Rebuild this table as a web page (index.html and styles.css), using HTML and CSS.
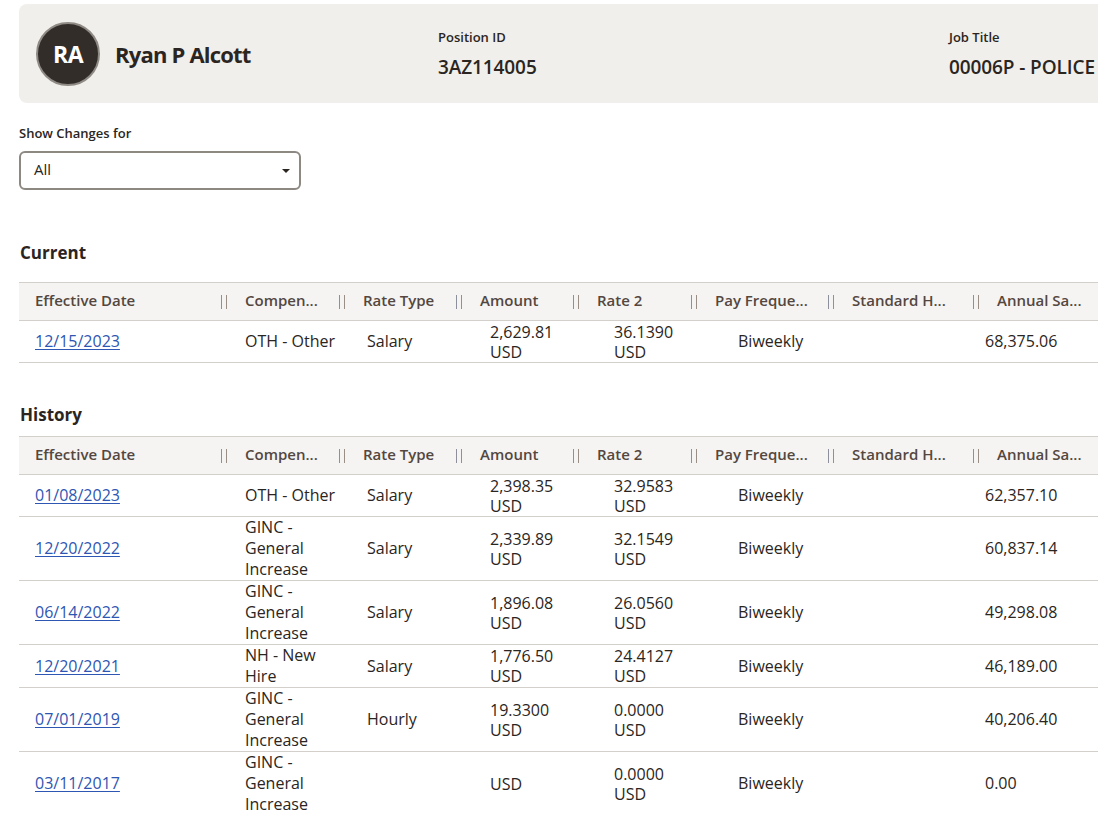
FILE: index.html
```html
<!DOCTYPE html>
<html lang="en">
<head>
<meta charset="utf-8">
<title>Compensation History</title>
<link rel="stylesheet" href="styles.css">
</head>
<body>
<div class="page">
  <div class="profile-card">
    <div class="person">
      <div class="avatar">RA</div>
      <div class="name">Ryan P Alcott</div>
    </div>
    <div class="field field-pos">
      <div class="field-label">Position ID</div>
      <div class="field-value">3AZ114005</div>
    </div>
    <div class="field field-job">
      <div class="field-label">Job Title</div>
      <div class="field-value">00006P - POLICE OFFICER</div>
    </div>
  </div>

  <div class="filter">
    <div class="filter-label">Show Changes for</div>
    <div class="select">
      <span>All</span>
      <svg class="caret" width="8" height="4" viewBox="0 0 8 4"><path d="M0 0H8L4 4Z" fill="#2b2522"/></svg>
    </div>
  </div>

  <section class="section section-current">
    <h2 class="section-title">Current</h2>
    <table class="grid">
      <colgroup>
        <col class="c1"><col class="c2"><col class="c3"><col class="c4"><col class="c5"><col class="c6"><col class="c7"><col class="c8">
      </colgroup>
      <thead>
        <tr>
          <th><div class="th"><span>Effective Date</span><i class="handle"></i></div></th>
          <th><div class="th"><span>Compen...</span><i class="handle"></i></div></th>
          <th><div class="th"><span>Rate Type</span><i class="handle"></i></div></th>
          <th><div class="th"><span>Amount</span><i class="handle"></i></div></th>
          <th><div class="th"><span>Rate 2</span><i class="handle"></i></div></th>
          <th><div class="th"><span>Pay Freque...</span><i class="handle"></i></div></th>
          <th><div class="th"><span>Standard H...</span><i class="handle"></i></div></th>
          <th><div class="th"><span>Annual Sa...</span></div></th>
        </tr>
      </thead>
      <tbody>
        <tr>
          <td class="d-date"><a href="#">12/15/2023</a></td>
          <td class="d-comp">OTH - Other</td>
          <td class="d-type">Salary</td>
          <td class="d-amt"><span class="ln">2,629.81</span><span class="ln">USD</span></td>
          <td class="d-rate"><span class="ln">36.1390</span><span class="ln">USD</span></td>
          <td class="d-freq">Biweekly</td>
          <td class="d-std"></td>
          <td class="d-ann">68,375.06</td>
        </tr>
      </tbody>
    </table>
  </section>

  <section class="section section-history">
    <h2 class="section-title">History</h2>
    <table class="grid">
      <colgroup>
        <col class="c1"><col class="c2"><col class="c3"><col class="c4"><col class="c5"><col class="c6"><col class="c7"><col class="c8">
      </colgroup>
      <thead>
        <tr>
          <th><div class="th"><span>Effective Date</span><i class="handle"></i></div></th>
          <th><div class="th"><span>Compen...</span><i class="handle"></i></div></th>
          <th><div class="th"><span>Rate Type</span><i class="handle"></i></div></th>
          <th><div class="th"><span>Amount</span><i class="handle"></i></div></th>
          <th><div class="th"><span>Rate 2</span><i class="handle"></i></div></th>
          <th><div class="th"><span>Pay Freque...</span><i class="handle"></i></div></th>
          <th><div class="th"><span>Standard H...</span><i class="handle"></i></div></th>
          <th><div class="th"><span>Annual Sa...</span></div></th>
        </tr>
      </thead>
      <tbody>
        <tr>
          <td class="d-date"><a href="#">01/08/2023</a></td>
          <td class="d-comp">OTH - Other</td>
          <td class="d-type">Salary</td>
          <td class="d-amt"><span class="ln">2,398.35</span><span class="ln">USD</span></td>
          <td class="d-rate"><span class="ln">32.9583</span><span class="ln">USD</span></td>
          <td class="d-freq">Biweekly</td>
          <td class="d-std"></td>
          <td class="d-ann">62,357.10</td>
        </tr>
        <tr>
          <td class="d-date"><a href="#">12/20/2022</a></td>
          <td class="d-comp"><span class="ln">GINC -</span><span class="ln">General</span><span class="ln">Increase</span></td>
          <td class="d-type">Salary</td>
          <td class="d-amt"><span class="ln">2,339.89</span><span class="ln">USD</span></td>
          <td class="d-rate"><span class="ln">32.1549</span><span class="ln">USD</span></td>
          <td class="d-freq">Biweekly</td>
          <td class="d-std"></td>
          <td class="d-ann">60,837.14</td>
        </tr>
        <tr>
          <td class="d-date"><a href="#">06/14/2022</a></td>
          <td class="d-comp"><span class="ln">GINC -</span><span class="ln">General</span><span class="ln">Increase</span></td>
          <td class="d-type">Salary</td>
          <td class="d-amt"><span class="ln">1,896.08</span><span class="ln">USD</span></td>
          <td class="d-rate"><span class="ln">26.0560</span><span class="ln">USD</span></td>
          <td class="d-freq">Biweekly</td>
          <td class="d-std"></td>
          <td class="d-ann">49,298.08</td>
        </tr>
        <tr>
          <td class="d-date"><a href="#">12/20/2021</a></td>
          <td class="d-comp"><span class="ln">NH - New</span><span class="ln">Hire</span></td>
          <td class="d-type">Salary</td>
          <td class="d-amt"><span class="ln">1,776.50</span><span class="ln">USD</span></td>
          <td class="d-rate"><span class="ln">24.4127</span><span class="ln">USD</span></td>
          <td class="d-freq">Biweekly</td>
          <td class="d-std"></td>
          <td class="d-ann">46,189.00</td>
        </tr>
        <tr>
          <td class="d-date"><a href="#">07/01/2019</a></td>
          <td class="d-comp"><span class="ln">GINC -</span><span class="ln">General</span><span class="ln">Increase</span></td>
          <td class="d-type">Hourly</td>
          <td class="d-amt"><span class="ln">19.3300</span><span class="ln">USD</span></td>
          <td class="d-rate"><span class="ln">0.0000</span><span class="ln">USD</span></td>
          <td class="d-freq">Biweekly</td>
          <td class="d-std"></td>
          <td class="d-ann">40,206.40</td>
        </tr>
        <tr>
          <td class="d-date"><a href="#">03/11/2017</a></td>
          <td class="d-comp"><span class="ln">GINC -</span><span class="ln">General</span><span class="ln">Increase</span></td>
          <td class="d-type"></td>
          <td class="d-amt"><span class="ln">USD</span></td>
          <td class="d-rate"><span class="ln">0.0000</span><span class="ln">USD</span></td>
          <td class="d-freq">Biweekly</td>
          <td class="d-std"></td>
          <td class="d-ann">0.00</td>
        </tr>
      </tbody>
    </table>
  </section>
</div>
</body>
</html>
```

FILE: styles.css
```css
html, body {
  margin: 0;
  padding: 0;
  overflow: hidden;
  background: #ffffff;
}

body {
  font-family: "Open Sans", "Liberation Sans", sans-serif;
  color: #2b2522;
}

.page {
  width: 1320px;
  padding: 4px 0 0 19px;
}

/* Profile card */
.profile-card {
  display: flex;
  align-items: flex-start;
  background: #f0efeb;
  border-radius: 8px;
  height: 99px;
  box-sizing: border-box;
  padding: 18px 0 0 17px;
}

.person {
  display: flex;
  align-items: center;
  gap: 15px;
  width: 402px;
}

.avatar {
  width: 64px;
  height: 64px;
  box-sizing: border-box;
  border-radius: 50%;
  background: #332d2a;
  border: 2px solid #8f8a84;
  color: #ffffff;
  display: flex;
  align-items: center;
  justify-content: center;
  font-weight: 700;
  font-size: 23px;
  letter-spacing: -0.5px;
}

.name {
  font-size: 22px;
  font-weight: 700;
  letter-spacing: -0.8px;
}

.field {
  padding-top: 6px;
}

.field-pos {
  width: 511px;
}

.field-label {
  font-size: 13px;
  font-weight: 600;
  line-height: 18px;
}

.field-value {
  margin-top: 10px;
  font-size: 19px;
  font-weight: 600;
  line-height: 22px;
  letter-spacing: -0.1px;
  white-space: nowrap;
}

/* Filter */
.filter {
  padding-top: 21px;
}

.filter-label {
  font-size: 13px;
  font-weight: 600;
  line-height: 18px;
}

.select {
  margin-top: 9px;
  width: 282px;
  height: 39px;
  box-sizing: border-box;
  border: 2px solid #8d8882;
  border-radius: 6px;
  display: flex;
  align-items: center;
  justify-content: space-between;
  padding: 0 9px 3px 13px;
  font-size: 15px;
}

.caret {
  display: block;
  margin-top: 3px;
}

/* Sections */
.section-current {
  padding-top: 52px;
}

.section-history {
  padding-top: 41px;
}

.section-title {
  margin: 0 0 18px 1px;
  font-size: 17px;
  font-weight: 700;
  line-height: 22px;
}

.section-history .section-title {
  margin-bottom: 10px;
}

/* Tables */
.grid {
  border-collapse: collapse;
  table-layout: fixed;
  width: 1250px;
  font-size: 16px;
  line-height: 21px;
}

.c1 { width: 210px; }
.c2 { width: 118px; }
.c3 { width: 117px; }
.c4 { width: 117px; }
.c5 { width: 118px; }
.c6 { width: 137px; }
.c7 { width: 145px; }
.c8 { width: 288px; }

.grid thead tr {
  background: #f5f4f2;
  border-top: 1px solid #d3d0cc;
  border-bottom: 1px solid #d3d0cc;
}

.grid th {
  height: 38px;
  padding: 0 0 3px 16px;
  box-sizing: border-box;
  text-align: left;
  font-size: 15px;
  font-weight: 600;
  color: #54473f;
  white-space: nowrap;
}

.th {
  display: flex;
  align-items: center;
  justify-content: space-between;
}

.handle {
  display: block;
  width: 4px;
  height: 14px;
  margin: 4px 2px 0 0;
  border-left: 1px solid #8d8f9c;
  border-right: 1px solid #9a8f86;
}

.grid td {
  padding: 0;
  vertical-align: middle;
  border-bottom: 1px solid #d3d0cc;
  height: 41px;
}

.ln {
  display: block;
}

.d-amt, .d-rate {
  line-height: 20px;
}

.d-date { padding-left: 16px !important; }
.d-comp { padding-left: 16px !important; }
.d-type { padding-left: 20px !important; }
.d-amt  { padding-left: 26px !important; }
.d-rate { padding-left: 33px !important; }
.d-freq { padding-left: 39px !important; }
.d-ann  { padding-left: 4px !important; }

.d-date a {
  color: #2e56b3;
  text-decoration: underline;
  text-underline-offset: 2px;
}
```
